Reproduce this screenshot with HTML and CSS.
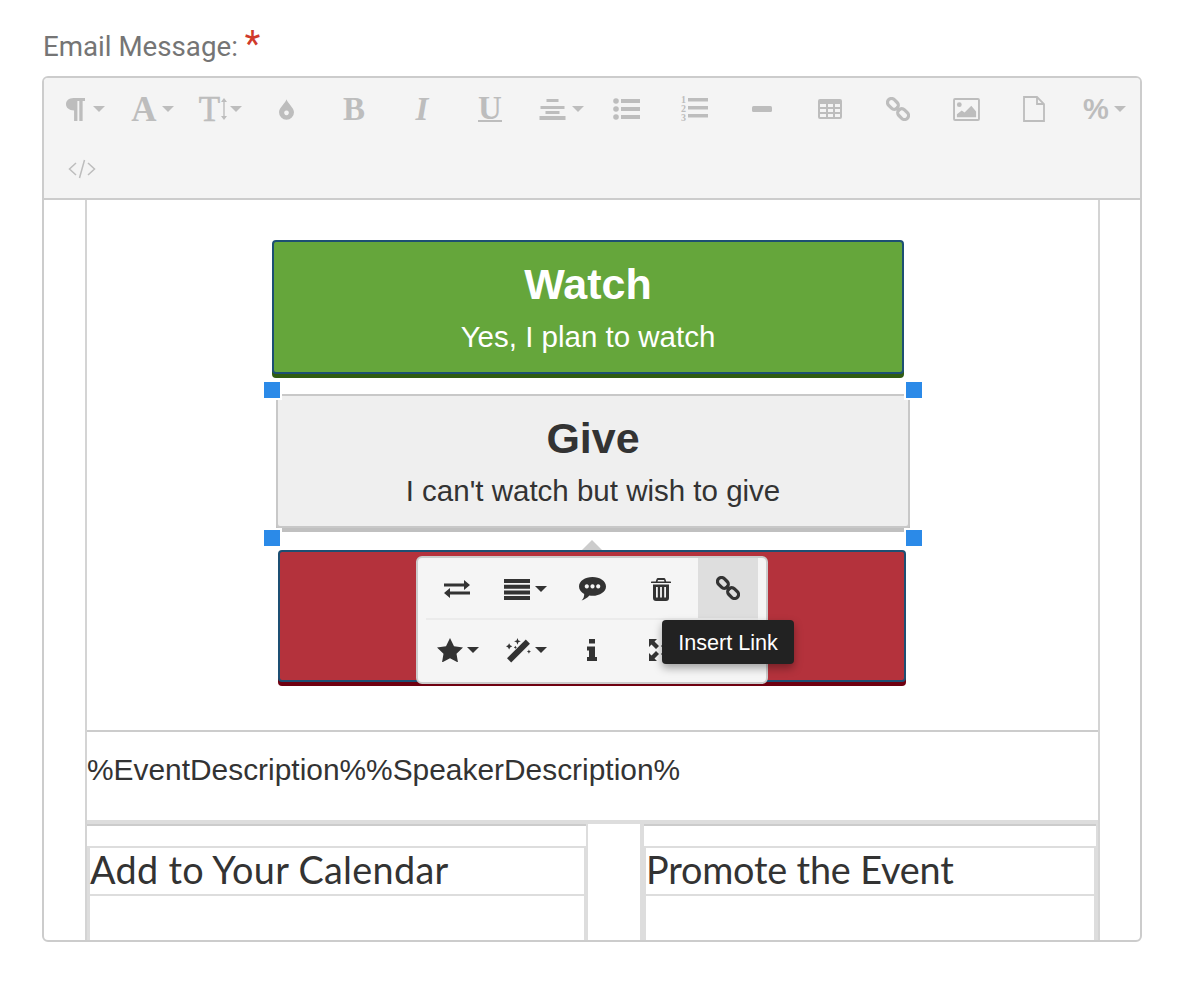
FILE: index.html
```html
<!DOCTYPE html>
<html lang="en">
<head>
<meta charset="utf-8">
<title>Email Message</title>
<link rel="stylesheet" href="styles.css">
</head>
<body>
<svg class="defs" width="0" height="0" aria-hidden="true">
  <symbol id="i-link" viewBox="0 0 24 24"><g transform="rotate(45 12 12)" fill="none" stroke="currentColor" stroke-width="3.200"><rect x="-1.200" y="8" width="12" height="8" rx="4"/><rect x="13.200" y="8" width="12" height="8" rx="4"/><path d="M9 12h6"/></g></symbol>
</svg>
<div class="field">
  <label class="field-label">Email Message:<span class="req">*</span></label>
  <div class="editor">
    <div class="toolbar">
      <div class="tb tb-c tb-para"><svg class="ic para" viewBox="0 0 20 24"><path d="M8 0h12v3h-2.500v21H14V3h-2v21H8.500V13C3 13 0 10 0 6.500S3 0 8 0z"/></svg><i class="caret"></i></div>
      <div class="tb tb-c"><span class="gl serif-b wide-a">A</span><i class="caret"></i></div>
      <div class="tb tb-c tb-t"><span class="gl serif-r t">T</span><svg class="updown" viewBox="0 0 6 22"><path d="M3 0l3 4H3.700v14H6l-3 4-3-4h2.300V4H0z"/></svg><i class="caret"></i></div>
      <div class="tb"><svg class="ic drop" viewBox="0 0 16 22"><path fill-rule="evenodd" d="M8 0c1 4 8 9 8 14a8 8 0 0 1-16 0C0 9 7 4 8 0zM8 12a2.500 2.500 0 1 0 .01 0z"/></svg></div>
      <div class="tb"><span class="gl serif-b">B</span></div>
      <div class="tb"><span class="gl serif-bi">I</span></div>
      <div class="tb"><span class="gl serif-b und">U</span></div>
      <div class="tb tb-c"><svg class="ic al" viewBox="0 0 26 22"><path d="M7 1h12v3H7zM1 8h24v3H1zM6 13h14v3H6zM0 18h26v4H0z"/></svg><i class="caret"></i></div>
      <div class="tb"><svg class="ic ul" viewBox="0 0 27 22"><circle cx="3" cy="3" r="2.800"/><circle cx="3" cy="11" r="2.800"/><circle cx="3" cy="19" r="2.800"/><path d="M8 1h19v4H8zM8 9h19v4H8zM8 17h19v4H8z"/></svg></div>
      <div class="tb"><svg class="ic ol" viewBox="0 0 27 29"><text x="0" y="8" class="ol-n">1</text><text x="0" y="17" class="ol-n">2</text><text x="0" y="26" class="ol-n">3</text><path d="M7 3h20v3.500H7zM7 11h20v3.500H7zM7 19h20v3.500H7z"/></svg></div>
      <div class="tb"><svg class="ic hr" viewBox="0 0 20 6"><rect width="20" height="6" rx="1.500"/></svg></div>
      <div class="tb"><svg class="ic tbl" viewBox="0 0 24 20"><path fill-rule="evenodd" d="M2 0h20a2 2 0 0 1 2 2v16a2 2 0 0 1-2 2H2a2 2 0 0 1-2-2V2a2 2 0 0 1 2-2zM2 5v3h6V5zm8 0v3h5V5zm7 0v3h5V5zM2 10v3h6v-3zm8 0v3h5v-3zm7 0v3h5v-3zM2 15v3h6v-3zm8 0v3h5v-3zm7 0v3h5v-3z"/></svg></div>
      <div class="tb"><svg class="ic chain"><use href="#i-link"/></svg></div>
      <div class="tb"><svg class="ic img" viewBox="0 0 28 24"><path fill-rule="evenodd" d="M2 0h24a2 2 0 0 1 2 2v20a2 2 0 0 1-2 2H2a2 2 0 0 1-2-2V2a2 2 0 0 1 2-2zm0 2v20h24V2z"/><circle cx="6.500" cy="7" r="2.500"/><path d="M4 20v-3l5-4 3 2 7-7 5 6v6z"/></svg></div>
      <div class="tb"><svg class="ic file" viewBox="0 0 22 26"><path d="M1 1h13l7 7v17H1z M14 1v7h7" fill="none" stroke="currentColor" stroke-width="1.800"/></svg></div>
      <div class="tb tb-c"><span class="gl sans-b pct">%</span><i class="caret"></i></div>
      <div class="tb"><svg class="ic code" viewBox="0 0 28 20"><path d="M8 4L1.500 10 8 16M20 4l6.500 6-6.500 6M16.500 1l-5 18" fill="none" stroke="currentColor" stroke-width="1.500"/></svg></div>
    </div>

    <div class="canvas">
      <div class="frame">
        <div class="cta-row">
          <a class="cta cta-green"><strong>Watch</strong><span>Yes, I plan to watch</span></a>
          <a class="cta cta-grey"><strong>Give</strong><span>I can't watch but wish to give</span></a>
          <a class="cta cta-red"></a>
        </div>
        <div class="desc-row">%EventDescription%%SpeakerDescription%</div>
        <div class="split">
          <div class="cell cell-a">
            <div class="cell-top"></div>
            <div class="cell-box">
              <div class="cell-title ttl-a">Add to Your Calendar</div>
            </div>
          </div>
          <div class="cell cell-b">
            <div class="cell-top"></div>
            <div class="cell-box">
              <div class="cell-title ttl-b">Promote the Event</div>
            </div>
          </div>
        </div>
      </div>

      <i class="handle h-tl"></i><i class="handle h-tr"></i><i class="handle h-bl"></i><i class="handle h-br"></i>
      <i class="pop-arrow"></i>
      <div class="popup">
        <div class="pop-row pop-top">
          <div class="pb pb-first"><svg class="pi swap" viewBox="0 0 26 20"><path d="M0 4.500h20V1l6 5-6 5V7.500H0zM26 12.500H6V9l-6 5 6 5v-3.500h20z"/></svg></div>
          <div class="pb"><svg class="pi just" viewBox="0 0 26 21"><path d="M0 0h26v4H0zM0 5.700h26v4H0zM0 11.400h26v4H0zM0 17h26v4H0z"/></svg><i class="caret dark"></i></div>
          <div class="pb"><svg class="pi cmt" viewBox="0 0 26 23"><path fill-rule="evenodd" d="M13 0c7.200 0 13 4 13 9s-5.800 9-13 9c-1 0-2-.1-3-.2C8 20 5 22 2.500 22.500 4.500 20.500 5 18.500 5 16.200 2 14.600 0 12 0 9c0-5 5.800-9 13-9zM7.500 7a2 2 0 1 0 .01 0zM13 7a2 2 0 1 0 .01 0zM18.500 7a2 2 0 1 0 .01 0z"/></svg></div>
          <div class="pb"><svg class="pi trash" viewBox="0 0 20 23"><path fill-rule="evenodd" d="M7 0h6a1.500 1.500 0 0 1 1.400 1l.8 2.500H19.500a.5.500 0 0 1 .5.500v1H0V4a.5.500 0 0 1 .5-.5h4.300L5.600 1A1.500 1.500 0 0 1 7 0zm0 2l-.5 1.500h7L13 2zM2 6.500h16V20a3 3 0 0 1-3 3H5a3 3 0 0 1-3-3zM5 9v10.500h1.800V9zm4.100 0v10.500h1.800V9zm4.100 0v10.500H15V9z"/></svg></div>
          <div class="pb pb-on"><svg class="pi chain-d"><use href="#i-link"/></svg></div>
        </div>
        <div class="pop-row pop-bottom">
          <div class="pb pb-l"><svg class="pi star" viewBox="0 0 26 24"><path d="M13 0l4 8.200 9 1.300-6.500 6.300L21 24.500 13 20.200 5 24.500l1.500-8.700L0 9.500l9-1.300z"/></svg><i class="caret dark"></i></div>
          <div class="pb pb-l"><svg class="pi wand" viewBox="0 0 24 24"><path d="M19 1.500l4 4L5 23.500 1 19.500z"/><path d="M3 5l1 2 2 1-2 1-1 2-1-2-2-1 2-1zM11 0l.9 2.300 2.300.9-2.300.9-.9 2.300-.9-2.300-2.300-.9 2.300-.9zM22 11l.6 1.400 1.400.6-1.400.6-.6 1.400-.6-1.400-1.400-.6 1.400-.6zM9 7.500l.5 1 1 .5-1 .5-.5 1-.5-1-1-.5 1-.5z"/></svg><i class="caret dark"></i></div>
          <div class="pb pb-narrow"><svg class="pi info" viewBox="0 0 10 22"><path d="M2 0h6v4.500H2zM0 7.500h8V18h2v4H0v-4h2v-6.500H0z"/></svg></div>
          <div class="pb pb-wide"><svg class="pi expand" viewBox="0 0 22 22"><path d="M0 0h8L5.500 2.500 10 7 7 10 2.500 5.500 0 8zM22 0v8l-2.500-2.500L15 10l-3-3 4.500-4.500L14 0zM0 22v-8l2.500 2.500L7 12l3 3-4.500 4.500L8 22zM22 22h-8l2.500-2.500L12 15l3-3 4.500 4.500L22 14z"/></svg></div>
        </div>
      </div>
      <div class="tooltip">Insert Link</div>
    </div>
  </div>
</div>
</body>
</html>
```

FILE: styles.css
```css
* { box-sizing: border-box; }
html, body { margin: 0; padding: 0; background: #fff; }
body { font-family: "Liberation Sans", Arial, sans-serif; color: #333; }
.defs { position: absolute; }

.field { padding: 24px 42px 0; }
.field-label {
  display: block;
  height: 52px;
  padding: 5px 0 0 1px;
  font: 400 27.7px/36px Roboto, sans-serif;
  color: #757575;
}
.req {
  color: #d03a2b;
  font-size: 36px;
  line-height: 20px;
  margin-left: 7px;
}

.editor {
  width: 1100px;
  height: 866px;
  border: 2px solid #ccc;
  border-radius: 6px;
  overflow: hidden;
  background: #fff;
}

.toolbar {
  display: flex;
  flex-wrap: wrap;
  height: 122px;
  padding: 0 4px;
  background: #f4f4f4;
  border-bottom: 2px solid #ccc;
  color: #bdbdbd;
}
.tb {
  width: 68px;
  height: 60px;
  padding-top: 2px;
  display: flex;
  align-items: center;
  justify-content: center;
  gap: 5px;
}
.tb-c { padding-left: 5px; }
.tb-para { gap: 8px; padding-left: 7px; }
.gl { line-height: 1; }
.serif-b { font: 700 33px/1 "Liberation Serif", serif; }
.wide-a { font-size: 35px; }
.serif-r { font: 400 35px/1 "Liberation Serif", serif; }
.serif-bi { font: italic 700 33px/1 "Liberation Serif", serif; }
.sans-b { font-family: "Liberation Sans", sans-serif; font-weight: 700; }
.pct { font-size: 29px; }
.t { -webkit-text-stroke: .6px #bdbdbd; }
.tb-t { gap: 3px; }
.und { border-bottom: 2px solid #bdbdbd; line-height: 23px; height: 25px; }
.updown { width: 6px; height: 22px; fill: #bdbdbd; margin-left: -2px; }
.caret {
  display: block;
  width: 0;
  height: 0;
  border: 6px solid transparent;
  border-bottom: 0;
  border-top: 6px solid #bdbdbd;
}
.caret.dark { border-top-color: #333; margin-left: 0; }

.ic { fill: #bdbdbd; color: #bdbdbd; display: block; }
.para { width: 19px; height: 23px; }
.drop { width: 15px; height: 21px; }
.al { width: 29px; height: 22px; }
.ul { width: 27px; height: 22px; }
.ol { width: 27px; height: 29px; }
.ol-n { font: 700 10px "Liberation Serif", serif; }
.hr { width: 20px; height: 6px; }
.tbl { width: 24px; height: 20px; }
.chain { width: 24px; height: 24px; }
.img { width: 27px; height: 23px; }
.file { width: 22px; height: 26px; }
.code { width: 28px; height: 20px; }

.canvas { position: relative; height: 740px; overflow: hidden; }
.frame {
  width: 1015px;
  height: 100%;
  margin-left: 41px;
  border-left: 2px solid #d4d4d4;
  border-right: 2px solid #d4d4d4;
}
.cta-row {
  padding: 40px 0 48px;
  border-bottom: 2px solid #ccc;
  display: flex;
  flex-direction: column;
  align-items: flex-start;
}
.cta {
  display: flex;
  flex-direction: column;
  align-items: center;
  border-radius: 4px;
  text-align: center;
  border: 2px solid #1d4f73;
  height: 134px;
  padding-top: 18px;
}
.cta strong { font-size: 43px; line-height: 48px; font-weight: 700; }
.cta span { font-size: 29.5px; line-height: 32px; margin-top: 13px; }
.cta-green {
  width: 632px;
  margin-left: 185px;
  background: #65a63b;
  color: #fff;
  box-shadow: 0 4px 0 #2f5c12;
}
.cta-grey {
  width: 634px;
  margin: 20px 0 0 189px;
  background: #efefef;
  border-color: #c8c8c8;
  color: #333;
  box-shadow: 0 4px 0 #c0c0c0;
}
.cta-red {
  width: 628px;
  height: 132px;
  margin: 22px 0 0 191px;
  background: #b4323c;
  box-shadow: 0 4px 0 #6f0010;
}

.desc-row {
  height: 88px;
  padding-top: 18px;
  font-size: 29.9px;
  line-height: 40px;
  color: #333;
}

.split {
  display: flex;
  border-top: 4px solid #ddd;
  height: 200px;
}
.cell { background: #fff; }
.cell-a { width: 501px; border-right: 2px solid #ddd; }
.cell-b { width: 458px; margin-left: 52px; border-left: 4px solid #ddd; border-right: 2px solid #ddd; }
.cell-top { height: 24px; border-bottom: 2px solid #ddd; border-top: 2px solid #ccc; }
.cell-box { height: 100%; border-left: 3px solid #ddd; border-right: 2px solid #ddd; }
.cell-b .cell-box { border-left-width: 2px; }
.cell-title {
  height: 48px;
  border-bottom: 2px solid #ddd;
  font: 400 37.8px/44px Lato, sans-serif;
  color: #333;
}
.ttl-a { letter-spacing: .3px; }
.ttl-b { letter-spacing: -.18px; }

.handle {
  position: absolute;
  width: 16px;
  height: 16px;
  background: #2b8ae8;
  outline: 2px solid #fff;
  outline-offset: 0;
}
.h-tl { left: 220px; top: 182px; }
.h-tr { left: 862px; top: 182px; }
.h-bl { left: 220px; top: 330px; }
.h-br { left: 862px; top: 330px; }

.pop-arrow {
  position: absolute;
  left: 538px;
  top: 340px;
  width: 0;
  height: 0;
  border: 10px solid transparent;
  border-top: 0;
  border-bottom: 10px solid #ccc;
}
.popup {
  position: absolute;
  left: 372px;
  top: 356px;
  width: 352px;
  height: 128px;
  padding: 0 4px;
  background: #f5f5f5;
  border: 2px solid #ccc;
  border-radius: 6px;
}
.pop-row { display: flex; height: 62px; }
.pop-top { border-bottom: 2px solid #ebebeb; margin: 0 4px 0 4px; }
.pop-bottom { margin-left: 2px; }
.pb {
  width: 68px;
  height: 60px;
  display: flex;
  align-items: center;
  justify-content: center;
  gap: 4px;
  color: #333;
}
.pop-top .pb { padding-top: 2px; }
.pb-first { width: 70px; margin-left: -4px; }
.pb-on { background: #dedede; width: 60px; margin-left: 4px; }
.pop-top .pb-on { padding-top: 0; }
.pb-narrow { width: 64px; }
.pb-wide { width: 72px; }
.pi { fill: #333; color: #333; display: block; }
.swap { width: 28px; height: 20px; }
.just { width: 28px; height: 21px; }
.cmt { width: 27px; height: 24px; }
.trash { width: 20px; height: 23px; }
.chain-d { width: 24px; height: 24px; }
.star { width: 26px; height: 24px; }
.wand { width: 25px; height: 25px; }
.info { width: 10px; height: 22px; }
.expand { width: 22px; height: 22px; }

.tooltip {
  position: absolute;
  left: 618px;
  top: 420px;
  width: 132px;
  height: 44px;
  background: #222;
  color: #fff;
  border-radius: 4px;
  box-shadow: 0 4px 8px rgba(0, 0, 0, .35);
  font-size: 21.6px;
  line-height: 46px;
  text-align: center;
}
```
